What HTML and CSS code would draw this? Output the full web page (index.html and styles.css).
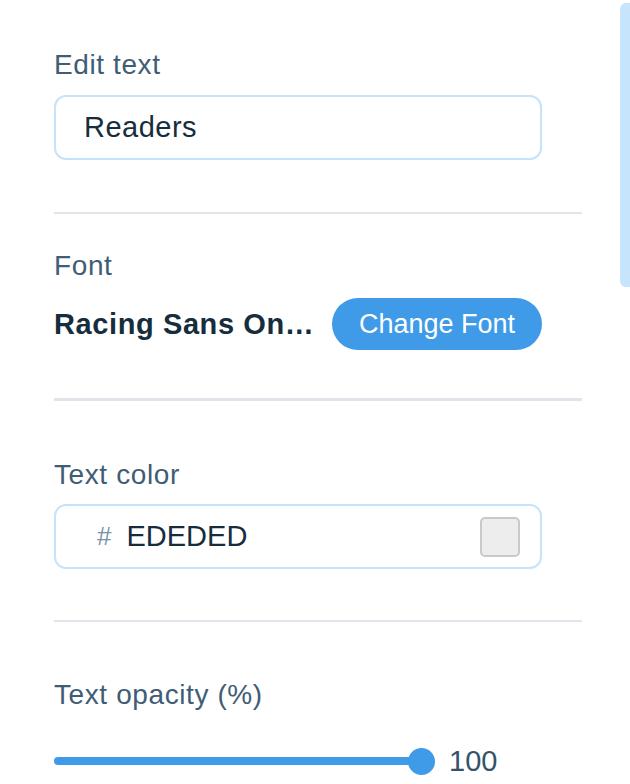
FILE: index.html
```html
<!DOCTYPE html>
<html>
<head>
<meta charset="utf-8">
<link rel="stylesheet" href="styles.css">
</head>
<body>
<div class="panel">
  <section class="section s-edit">
    <div class="label">Edit text</div>
    <div class="field"><span class="field-text">Readers</span></div>
  </section>
  <section class="section s-font">
    <div class="label">Font</div>
    <div class="font-row">
      <span class="font-name">Racing Sans On…</span>
      <button class="btn">Change Font</button>
    </div>
  </section>
  <section class="section s-color">
    <div class="label">Text color</div>
    <div class="field color-field">
      <span class="hash">#</span>
      <span class="field-text hex">EDEDED</span>
      <span class="swatch"></span>
    </div>
  </section>
  <section class="section s-opacity">
    <div class="label">Text opacity (%)</div>
    <div class="slider-row">
      <div class="slider">
        <div class="track"></div>
        <div class="thumb"></div>
      </div>
      <span class="value">100</span>
    </div>
  </section>
</div>
<div class="scrollbar"></div>
</body>
</html>
```
FILE: styles.css
```css
html, body {
  margin: 0;
  padding: 0;
  background: #ffffff;
  overflow: hidden;
}
body {
  font-family: "Liberation Sans", Arial, sans-serif;
  width: 630px;
  height: 784px;
}
.panel {
  padding-left: 54px;
  width: 528px;
}
.section {
  border-bottom: 2px solid #dfe5eb;
}
.label {
  font-size: 28px;
  line-height: 34px;
  letter-spacing: 0.6px;
  color: #3f5d76;
}
.s-edit { padding: 48px 0 52px; }
.s-font { padding: 35px 0 48px; border-bottom-width: 3px; border-bottom-color: #e1e4ea; }
.s-color { padding: 57px 0 51px; }
.s-opacity { padding: 56px 0 0; border-bottom: none; }

.s-edit .label { margin-bottom: 13px; }
.s-color .label { margin-bottom: 12px; }
.s-font .label { margin-bottom: 15px; }
.s-opacity .label { margin-bottom: 35px; }

.field {
  box-sizing: border-box;
  width: 488px;
  height: 65px;
  border: 2px solid #c5e4fc;
  border-radius: 12px;
  display: flex;
  align-items: center;
  padding-left: 28px;
}
.field-text {
  font-size: 29px;
  color: #162d3d;
}
.s-edit .field-text { letter-spacing: 0.5px; }
.font-row {
  width: 488px;
  display: flex;
  align-items: center;
  justify-content: space-between;
}
.font-name {
  font-size: 29px;
  font-weight: 700;
  letter-spacing: 0.6px;
  color: #162d3d;
}
.btn {
  width: 210px;
  height: 52px;
  border: none;
  border-radius: 26px;
  background: #3f9be8;
  color: #ffffff;
  font-family: inherit;
  font-size: 27px;
  padding: 0;
}
.color-field {
  padding-left: 41px;
  padding-right: 20px;
}
.hash {
  font-size: 26px;
  color: #7a92a5;
  margin-right: 15px;
}
.hex { flex: 1; }
.swatch {
  box-sizing: border-box;
  width: 40px;
  height: 40px;
  background: #ededed;
  border: 2px solid #c7cacd;
  border-radius: 5px;
}
.slider-row {
  display: flex;
  align-items: center;
  height: 28px;
}
.slider {
  width: 381px;
  display: flex;
  align-items: center;
}
.track {
  flex: 1;
  height: 8px;
  border-radius: 4px;
  background: #3f9be8;
}
.thumb {
  width: 27px;
  height: 27px;
  border-radius: 50%;
  background: #3f9be8;
  margin-left: -14px;
}
.value {
  margin-left: 14px;
  font-size: 29px;
  color: #32536a;
}
.scrollbar {
  position: fixed;
  top: 3px;
  left: 620px;
  width: 16px;
  height: 284px;
  border-radius: 6px;
  background: #c6e4fc;
}
```
